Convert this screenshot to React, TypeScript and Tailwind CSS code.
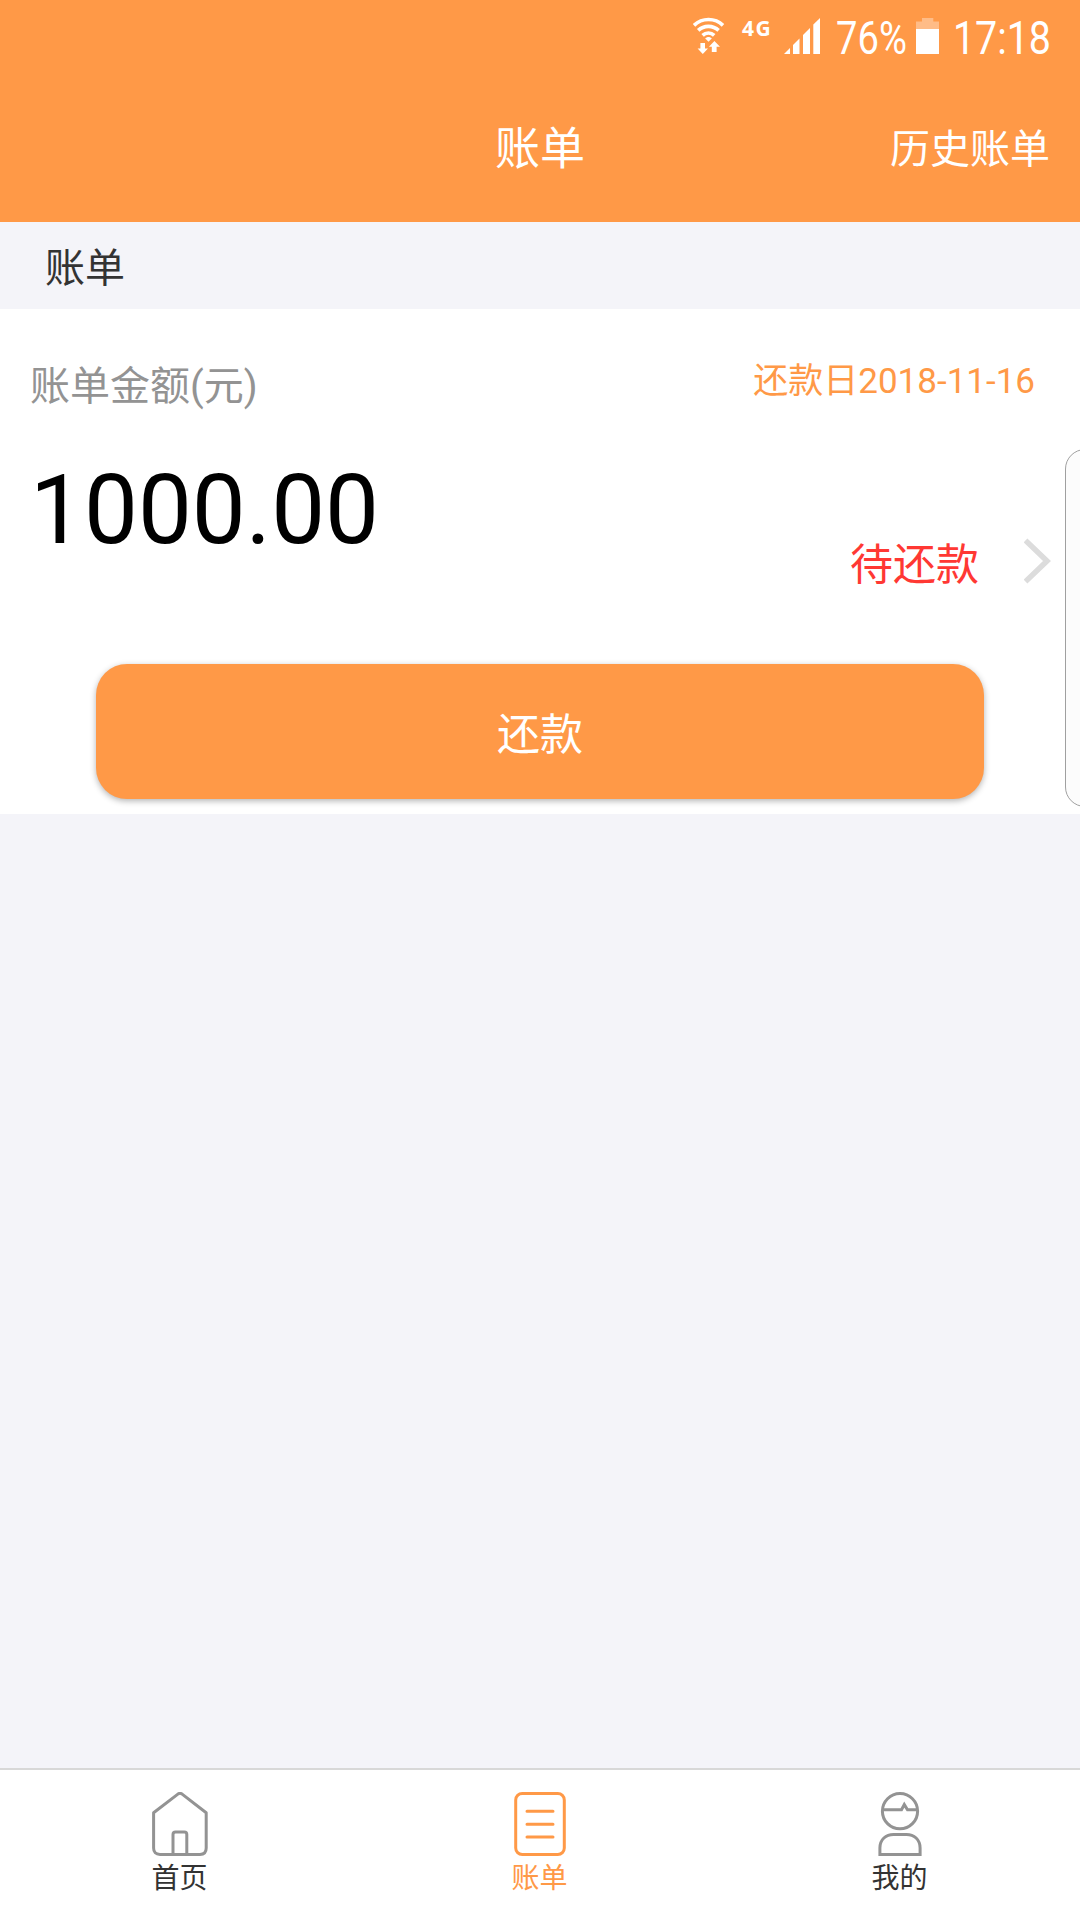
import type { ReactNode } from "react";
import clsx from "clsx";

function WifiIcon() {
  return (
    <svg className="w-8 h-10 shrink-0" viewBox="0 0 32 40" fill="none">
      <g stroke="#fff" strokeWidth="3.6">
        <path d="M1 9.4C9 1.6 22 1.6 30 9.4" />
        <path d="M5.2 14.4C10.8 9 20 9 25.6 14.4" />
        <path d="M9.6 19.4C12.9 16.2 17.9 16.2 21.2 19.4" />
      </g>
      <path d="M12.2 22.4C14 20.4 17 20.4 18.8 22.4L15.5 25.8Z" fill="#fff" />
      <path d="M7.4 27H12V32.4H15L9.8 38L4.6 32.4H7.4Z" fill="#fff" />
      <path d="M18.8 36H23.6V30.8H27L21.4 25L15.9 30.8H18.8Z" fill="#fff" />
    </svg>
  );
}

function SignalIcon() {
  return (
    <svg className="w-9 h-9 shrink-0" viewBox="0 0 36 36" fill="#fff">
      <path d="M0 36L6 30V36Z" />
      <path d="M9 27L15.5 20.5V36H9Z" />
      <path d="M19 17L26 10V36H19Z" />
      <path d="M29.3 6.5L36 0V36H29.3Z" />
    </svg>
  );
}

function BatteryIcon() {
  return (
    <svg className="w-[23px] h-9 shrink-0" viewBox="0 0 23 36" fill="#fff">
      <path d="M6 0H17.3V3.6H23V11H0V3.6H6Z" opacity="0.35" />
      <path d="M0 11H23V36H0Z" />
    </svg>
  );
}

function HomeIcon() {
  return (
    <svg className="w-14 h-16" viewBox="0 0 56 64" fill="none" stroke="#939393" strokeWidth="3">
      <path d="M1.6 20.8L26.2 1.9Q28 0.8 29.8 1.9L54.2 20.8V56Q54.2 62.4 48 62.4H8Q1.6 62.4 1.6 56Z" strokeLinejoin="round" />
      <path d="M21 62V42.5Q21 40 23.5 40H32.3Q34.8 40 34.8 42.5V62" />
    </svg>
  );
}

function BillIcon() {
  return (
    <svg className="w-14 h-16" viewBox="0 0 56 64" fill="none" stroke="#ff9947" strokeWidth="3">
      <rect x="3.7" y="1.5" width="48.6" height="61" rx="6.5" />
      <path d="M15 19.3H41M15 32.2H41M15 45H41" strokeLinecap="round" />
    </svg>
  );
}

function MineIcon() {
  return (
    <svg className="w-14 h-16" viewBox="0 0 56 64" fill="none" stroke="#939393" strokeWidth="3">
      <circle cx="28" cy="19.2" r="17.6" />
      <path d="M10.5 17.8H29.5L32.3 12.6L35.5 17.8H45.5" />
      <path d="M7.9 62.4V56C7.9 47.5 14 42.4 21.5 42.4H34.5C42 42.4 48.1 47.5 48.1 56V62.4Z" />
    </svg>
  );
}

const tabs: { label: string; icon: ReactNode; active?: boolean }[] = [
  { label: "首页", icon: <HomeIcon /> },
  { label: "账单", icon: <BillIcon />, active: true },
  { label: "我的", icon: <MineIcon /> },
];

export default function App() {
  return (
    <div className="relative flex flex-col w-[1080px] h-[1920px] overflow-hidden bg-[#f4f4f9] font-['Roboto','Noto_Sans_CJK_SC',sans-serif]">
      <header className="h-[222px] shrink-0 bg-[#ff9947] text-white">
        <div className="flex h-[75px] pl-[693px] pt-4">
          <WifiIcon />
          <span className="ml-[17px] w-[30px] font-['Noto_Sans'] text-[21px] font-bold leading-[24px] tracking-[1.5px]">
            4G
          </span>
          <div className="ml-3 mt-0.5">
            <SignalIcon />
          </div>
          <span className="ml-4 w-[72px] origin-left scale-x-[0.83] text-[46px] leading-[44px] whitespace-nowrap">
            76%
          </span>
          <div className="ml-2 mt-0.5">
            <BatteryIcon />
          </div>
          <span className="ml-3.5 origin-left scale-x-[0.855] text-[46px] leading-[44px] whitespace-nowrap">
            17:18
          </span>
        </div>
        <div className="grid grid-cols-3 items-center h-[147px] px-[30px] pt-[3px]">
          <h1 className="col-start-2 text-center text-[45px] leading-[60px]">账单</h1>
          <a className="text-right text-[40px] leading-[60px]">历史账单</a>
        </div>
      </header>

      <h2 className="flex items-center h-[87px] shrink-0 pl-[45px] pt-1.5 text-[40px] text-[#333333]">
        账单
      </h2>

      <section className="h-[505px] shrink-0 bg-white pt-[52px]">
        <div className="flex justify-between h-[50px] pl-[30px] pr-[45px]">
          <span className="pt-[1px] text-[40px] leading-[50px] text-[#939393]">账单金额(元)</span>
          <span className="text-[35px] leading-[42px] text-[#ff9947]">还款日2018-11-16</span>
        </div>
        <div className="flex justify-between pl-[30px] pr-[29px]">
          <span className="pt-[43px] text-[96px] leading-[112px] text-black">1000.00</span>
          <div className="flex items-center h-[50px] mt-[125px]">
            <span className="pt-[7px] text-[43px] leading-[50px] text-[#ff3833]">待还款</span>
            <svg className="ml-[45px] w-[27px] h-[46px]" viewBox="0 0 27 46" fill="none" stroke="#dcdcdc" strokeWidth="5.5">
              <path d="M1.5 2.5L23 23L1.5 43.5" />
            </svg>
          </div>
        </div>
        <button className="block w-[888px] h-[135px] mx-auto mt-[78px] pt-[7px] rounded-[31px] bg-[#ff9947] text-[43px] text-white shadow-[0_2px_6px_rgba(0,0,0,0.3)]">
          还款
        </button>
      </section>

      <nav className="grid grid-cols-3 h-[152px] mt-auto border-t-2 border-[#d8d8d8] bg-white">
        {tabs.map(({ label, icon, active }) => (
          <div key={label} className="flex flex-col items-center pt-[22px]">
            {icon}
            <span
              className={clsx(
                "mt-[5px] pr-[1px] text-[28px] leading-9",
                active ? "text-[#ff9947]" : "text-[#333333]"
              )}
            >
              {label}
            </span>
          </div>
        ))}
      </nav>

      {/* edge panel handle */}
      <div className="absolute top-[449px] left-[1065px] w-10 h-[358px] rounded-[20px] border-[1.5px] border-[#a0a0a0] bg-[#fcfcfc]" />
    </div>
  );
}
